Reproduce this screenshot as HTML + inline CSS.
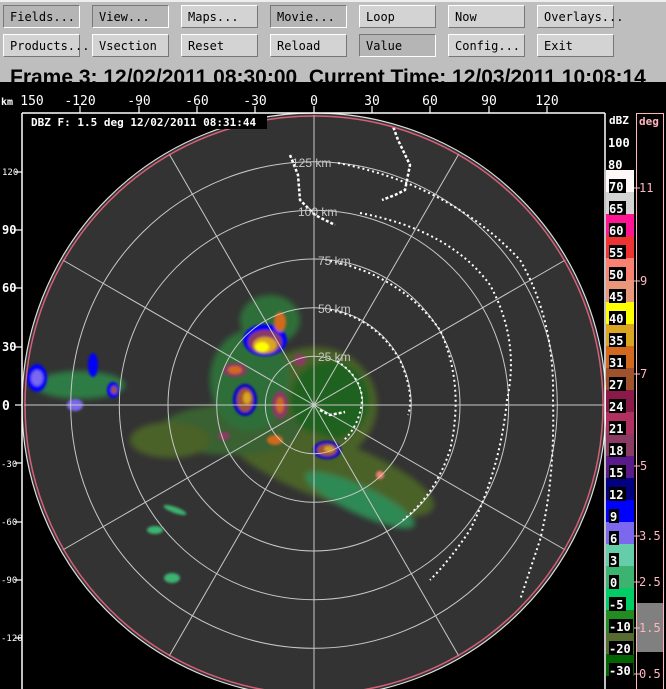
<!DOCTYPE html>
<html><head><meta charset="utf-8"><style>
*{margin:0;padding:0;box-sizing:border-box}
body{width:666px;height:689px;overflow:hidden;background:#000;position:relative;font-family:"Liberation Sans",sans-serif}
#top{position:absolute;left:0;top:0;width:666px;height:82px;background:#bebebe;border-top:2px solid #eee}
.b{position:absolute;width:77px;height:23px;background:#d3d3d3;border:1px solid;border-color:#fff #777 #777 #fff;font:12px "DejaVu Sans Mono","Liberation Mono",monospace;color:#000;padding:4px 0 0 6px;white-space:nowrap}
.p{background:#b5b5b5;border-color:#777 #fff #fff #777}
#title{position:absolute;left:10px;top:65px;font:bold 21px/22px "Liberation Sans",sans-serif;color:#000;white-space:nowrap;height:17px;overflow:hidden;letter-spacing:0px}
svg{position:absolute;left:0;top:0}
</style></head><body>
<div id="top">
<div class="b p" style="left:3px;top:3px">Fields...</div>
<div class="b p" style="left:92px;top:3px">View...</div>
<div class="b" style="left:181px;top:3px">Maps...</div>
<div class="b p" style="left:270px;top:3px">Movie...</div>
<div class="b" style="left:359px;top:3px">Loop</div>
<div class="b" style="left:448px;top:3px">Now</div>
<div class="b" style="left:537px;top:3px">Overlays...</div>
<div class="b" style="left:3px;top:32px">Products...</div>
<div class="b" style="left:92px;top:32px">Vsection</div>
<div class="b" style="left:181px;top:32px">Reset</div>
<div class="b" style="left:270px;top:32px">Reload</div>
<div class="b p" style="left:359px;top:32px">Value</div>
<div class="b" style="left:448px;top:32px">Config...</div>
<div class="b" style="left:537px;top:32px">Exit</div>
<div id="title">Frame 3: 12/02/2011 08:30:00&nbsp;&nbsp;Current Time: 12/03/2011 10:08:14</div>
</div>
<svg width="666" height="689" viewBox="0 0 666 689" style="top:0">
<defs>
<clipPath id="c"><circle cx="314" cy="405" r="290"/></clipPath>
<filter id="bl"><feGaussianBlur stdDeviation="3"/></filter>
<filter id="bl2"><feGaussianBlur stdDeviation="1.2"/></filter>
</defs>
<rect x="0" y="82" width="666" height="607" fill="#000"/>
<circle cx="314" cy="405" r="292" fill="#333"/>
<g clip-path="url(#c)">
<g filter="url(#bl)" opacity="0.85">
<ellipse cx="315" cy="405" rx="62" ry="58" fill="#4f6b28"/>
<ellipse cx="330" cy="400" rx="40" ry="40" fill="#1f6a1f"/>
<ellipse cx="330" cy="470" rx="110" ry="30" fill="#4f6b28" transform="rotate(20 330 470)"/>
<ellipse cx="230" cy="430" rx="70" ry="25" fill="#3a6a30"/>
<ellipse cx="270" cy="320" rx="30" ry="25" fill="#2f7a3a"/>
<ellipse cx="360" cy="500" rx="60" ry="14" fill="#2e9a5a" transform="rotate(25 360 500)"/>
<ellipse cx="170" cy="440" rx="40" ry="18" fill="#4f6b28"/>
<ellipse cx="80" cy="385" rx="45" ry="14" fill="#2e8a4a"/>
<ellipse cx="250" cy="380" rx="40" ry="50" fill="#2e7a3a"/>
</g>
<g filter="url(#bl2)">
<ellipse cx="265" cy="340" rx="22" ry="16" fill="#0000ff"/>
<ellipse cx="265" cy="342" rx="17" ry="12" fill="#8b3a62"/>
<ellipse cx="265" cy="345" rx="12" ry="8" fill="#daa520"/>
<ellipse cx="262" cy="347" rx="7" ry="5" fill="#ffff00"/>
<ellipse cx="280" cy="322" rx="6" ry="10" fill="#d2691e"/>
<ellipse cx="235" cy="370" rx="12" ry="7" fill="#8b3a62"/>
<ellipse cx="235" cy="370" rx="7" ry="4" fill="#d2691e"/>
<ellipse cx="245" cy="400" rx="12" ry="16" fill="#0000cc"/>
<ellipse cx="245" cy="400" rx="8" ry="12" fill="#a0522d"/>
<ellipse cx="247" cy="398" rx="4" ry="6" fill="#daa520"/>
<ellipse cx="280" cy="405" rx="8" ry="14" fill="#8b3a62"/>
<ellipse cx="280" cy="405" rx="4" ry="8" fill="#d2691e"/>
<ellipse cx="275" cy="440" rx="8" ry="5" fill="#d2691e"/>
<ellipse cx="327" cy="450" rx="14" ry="9" fill="#0000cc"/>
<ellipse cx="327" cy="450" rx="10" ry="6" fill="#a0522d"/>
<ellipse cx="329" cy="449" rx="5" ry="3" fill="#daa520"/>
<ellipse cx="300" cy="360" rx="6" ry="6" fill="#8b3a62"/>
<ellipse cx="224" cy="436" rx="6" ry="4" fill="#8b3a62"/>
<ellipse cx="37" cy="378" rx="10" ry="14" fill="#0000ff"/>
<ellipse cx="37" cy="378" rx="6" ry="8" fill="#7b68ee"/>
<ellipse cx="93" cy="365" rx="5" ry="12" fill="#0000ff"/>
<ellipse cx="113" cy="390" rx="6" ry="8" fill="#0000ff"/>
<ellipse cx="114" cy="390" rx="3" ry="4" fill="#a0522d"/>
<ellipse cx="75" cy="405" rx="8" ry="6" fill="#7b68ee"/>
<ellipse cx="175" cy="510" rx="12" ry="3" fill="#3cb371" transform="rotate(20 175 510)"/>
<ellipse cx="155" cy="530" rx="8" ry="4" fill="#3cb371"/>
<ellipse cx="172" cy="578" rx="8" ry="5" fill="#3cb371"/>
<ellipse cx="380" cy="475" rx="4" ry="4" fill="#fa8072"/>
</g>
<g stroke="#c8c8c8" stroke-width="1" fill="none">
<circle cx="314" cy="405" r="48.7"/><circle cx="314" cy="405" r="97.3"/><circle cx="314" cy="405" r="146"/><circle cx="314" cy="405" r="194.7"/><circle cx="314" cy="405" r="243.3"/>
<line x1="14" y1="405" x2="614" y2="405"/><line x1="314" y1="105" x2="314" y2="705"/>
<line x1="164" y1="145" x2="464" y2="665"/><line x1="464" y1="145" x2="164" y2="665"/>
<line x1="54" y1="255" x2="574" y2="555"/><line x1="574" y1="255" x2="54" y2="555"/>
</g>
<g fill="none" stroke="#fff" stroke-width="2" stroke-dasharray="2 3">
<path d="M337 361 Q362 378 362 400 Q360 425 343 441"/>
<path d="M330 310 Q375 318 400 360 Q415 395 408 415"/>
<path d="M330 261 Q400 275 440 330 Q465 385 450 450 Q435 495 403 520"/>
<path d="M360 213 Q450 230 490 285 Q520 340 507 400 Q500 470 470 530 Q450 560 430 580"/>
<path d="M338 163 Q450 185 520 260 Q555 320 553 400 Q555 480 540 540 Q530 570 520 600"/>
</g>
<g fill="none" stroke="#fff" stroke-width="2.5" stroke-dasharray="3 2">
<path d="M290 155 L298 175 L300 200 L315 215 L335 225"/>
<path d="M390 118 L398 140 L410 165 L405 190 L395 195 L382 200"/>
<path d="M320 410 L330 415 L345 412"/>
</g>
<g font-family="Liberation Sans,sans-serif" font-size="12" fill="#c8c8c8">
<text x="318" y="361">25 km</text><text x="318" y="313">50 km</text><text x="318" y="265">75 km</text><text x="298" y="216">100 km</text><text x="292" y="167">125 km</text>
</g>
</g>
<circle cx="314" cy="405" r="289" fill="none" stroke="#ff6a8a" stroke-width="1.5" opacity="0.8"/>
<circle cx="314" cy="405" r="292" fill="none" stroke="#ddd" stroke-width="1.2"/>
<g stroke="#fff" stroke-width="1.5" fill="none">
<line x1="22" y1="113" x2="22" y2="689"/><line x1="22" y1="113" x2="605" y2="113"/><line x1="605" y1="113" x2="605" y2="689"/>
</g>
<rect x="27" y="114" width="240" height="15" fill="#000"/>
<text x="31" y="126" font-family="DejaVu Sans Mono,Liberation Mono,monospace" font-size="11" font-weight="bold" fill="#fff">DBZ F: 1.5 deg 12/02/2011 08:31:44</text>
<g font-family="DejaVu Sans Mono,Liberation Mono,monospace" font-size="13" fill="#fff" text-anchor="middle">
<text x="32" y="105">150</text><text x="80" y="105">-120</text><text x="139" y="105">-90</text><text x="197" y="105">-60</text><text x="255" y="105">-30</text><text x="314" y="105">0</text><text x="372" y="105">30</text><text x="430" y="105">60</text><text x="489" y="105">90</text><text x="547" y="105">120</text>
</g>
<text x="1" y="105" font-family="DejaVu Sans Mono,monospace" font-size="10" font-weight="bold" fill="#fff">km</text>
<g stroke="#fff" stroke-width="1.2">
<line x1="80" y1="106" x2="80" y2="113"/><line x1="139" y1="106" x2="139" y2="113"/><line x1="197" y1="106" x2="197" y2="113"/><line x1="255" y1="106" x2="255" y2="113"/><line x1="314" y1="106" x2="314" y2="113"/><line x1="372" y1="106" x2="372" y2="113"/><line x1="430" y1="106" x2="430" y2="113"/><line x1="489" y1="106" x2="489" y2="113"/><line x1="547" y1="106" x2="547" y2="113"/>
<line x1="15" y1="172" x2="22" y2="172"/><line x1="15" y1="230" x2="22" y2="230"/><line x1="15" y1="288" x2="22" y2="288"/><line x1="15" y1="347" x2="22" y2="347"/><line x1="15" y1="405" x2="22" y2="405"/><line x1="15" y1="463" x2="22" y2="463"/><line x1="15" y1="522" x2="22" y2="522"/><line x1="15" y1="580" x2="22" y2="580"/><line x1="15" y1="638" x2="22" y2="638"/>
</g>
<g font-family="DejaVu Sans Mono,monospace" font-size="9" fill="#fff">
<text x="2" y="175">120</text><text x="2" y="234" font-size="12" font-weight="bold">90</text><text x="2" y="292" font-size="12" font-weight="bold">60</text><text x="2" y="351" font-size="12" font-weight="bold">30</text><text x="2" y="410" font-size="13" font-weight="bold">0</text><text x="1" y="467">-30</text><text x="1" y="525">-60</text><text x="1" y="583">-90</text><text x="1" y="641">-120</text>
</g>
<text x="609" y="124" font-family="DejaVu Sans Mono,monospace" font-size="11" font-weight="bold" fill="#fff">dBZ</text>
<text x="608" y="147" font-family="DejaVu Sans Mono,monospace" font-size="12" font-weight="bold" fill="#fff">100</text>
<text x="608" y="169" font-family="DejaVu Sans Mono,monospace" font-size="12" font-weight="bold" fill="#fff">80</text>
<g>
<rect x="606" y="170" width="28" height="22" fill="#fff8f8"/>
<rect x="606" y="192" width="28" height="22" fill="#d3d3d3"/>
<rect x="606" y="214" width="28" height="22" fill="#ff1493"/>
<rect x="606" y="236" width="28" height="22" fill="#ee3333"/>
<rect x="606" y="258" width="28" height="22" fill="#fa8072"/>
<rect x="606" y="280" width="28" height="22" fill="#e9967a"/>
<rect x="606" y="302" width="28" height="22" fill="#ffff00"/>
<rect x="606" y="324" width="28" height="22" fill="#daa520"/>
<rect x="606" y="346" width="28" height="22" fill="#d2691e"/>
<rect x="606" y="368" width="28" height="22" fill="#a0522d"/>
<rect x="606" y="390" width="28" height="22" fill="#8b1a4a"/>
<rect x="606" y="412" width="28" height="22" fill="#b03060"/>
<rect x="606" y="434" width="28" height="22" fill="#8b3a62"/>
<rect x="606" y="456" width="28" height="22" fill="#5b1a8b"/>
<rect x="606" y="478" width="28" height="22" fill="#000080"/>
<rect x="606" y="500" width="28" height="22" fill="#0000ff"/>
<rect x="606" y="522" width="28" height="22" fill="#7b68ee"/>
<rect x="606" y="544" width="28" height="22" fill="#66cdaa"/>
<rect x="606" y="566" width="28" height="22" fill="#3cb371"/>
<rect x="606" y="588" width="28" height="22" fill="#00cd66"/>
<rect x="606" y="610" width="28" height="22" fill="#228b22"/>
<rect x="606" y="632" width="28" height="22" fill="#556b2f"/>
<rect x="606" y="654" width="28" height="22" fill="#006400"/>
</g>
<g fill="#000">
<rect x="609" y="179" width="17" height="14"/><rect x="609" y="201" width="17" height="14"/><rect x="609" y="223" width="17" height="14"/><rect x="609" y="245" width="17" height="14"/><rect x="609" y="267" width="17" height="14"/><rect x="609" y="289" width="17" height="14"/><rect x="609" y="311" width="17" height="14"/><rect x="609" y="333" width="17" height="14"/><rect x="609" y="355" width="17" height="14"/><rect x="609" y="377" width="17" height="14"/><rect x="609" y="399" width="17" height="14"/><rect x="609" y="421" width="17" height="14"/><rect x="609" y="443" width="17" height="14"/><rect x="609" y="465" width="17" height="14"/><rect x="609" y="487" width="17" height="14"/><rect x="609" y="509" width="10" height="14"/><rect x="609" y="531" width="10" height="14"/><rect x="609" y="553" width="10" height="14"/><rect x="609" y="575" width="10" height="14"/><rect x="609" y="597" width="17" height="14"/><rect x="609" y="619" width="24" height="14"/><rect x="609" y="641" width="24" height="14"/><rect x="609" y="663" width="24" height="14"/>
</g>
<g font-family="DejaVu Sans Mono,monospace" font-size="12" font-weight="bold" fill="#fff">
<text x="609" y="191">70</text><text x="609" y="213">65</text><text x="609" y="235">60</text><text x="609" y="257">55</text><text x="609" y="279">50</text><text x="609" y="301">45</text><text x="609" y="323">40</text><text x="609" y="345">35</text><text x="609" y="367">31</text><text x="609" y="389">27</text><text x="609" y="411">24</text><text x="609" y="433">21</text><text x="609" y="455">18</text><text x="609" y="477">15</text><text x="609" y="499">12</text><text x="610" y="521">9</text><text x="610" y="543">6</text><text x="610" y="565">3</text><text x="610" y="587">0</text><text x="609" y="609">-5</text><text x="609" y="631">-10</text><text x="609" y="653">-20</text><text x="609" y="675">-30</text>
</g>
<rect x="636" y="603" width="28" height="49" fill="#808080"/>
<g stroke="#ffb6c1" stroke-width="1" fill="none">
<line x1="636.5" y1="113" x2="636.5" y2="689"/><line x1="663.5" y1="113" x2="663.5" y2="689"/><line x1="636" y1="113.5" x2="664" y2="113.5"/>
<line x1="634" y1="188" x2="640" y2="188"/><line x1="634" y1="281" x2="640" y2="281"/><line x1="634" y1="374" x2="640" y2="374"/><line x1="634" y1="466" x2="640" y2="466"/><line x1="634" y1="536" x2="640" y2="536"/><line x1="634" y1="582" x2="640" y2="582"/><line x1="634" y1="628" x2="640" y2="628"/><line x1="634" y1="674" x2="640" y2="674"/>
</g>
<g font-family="DejaVu Sans Mono,monospace" font-size="12" fill="#ffb6c1">
<text x="639" y="125" font-weight="bold" font-size="11">deg</text>
<text x="639" y="192">11</text><text x="640" y="285">9</text><text x="640" y="378">7</text><text x="640" y="470">5</text><text x="639" y="540">3.5</text><text x="639" y="586">2.5</text><text x="639" y="632">1.5</text><text x="639" y="678">0.5</text>
</g>
</svg>
</body></html>
